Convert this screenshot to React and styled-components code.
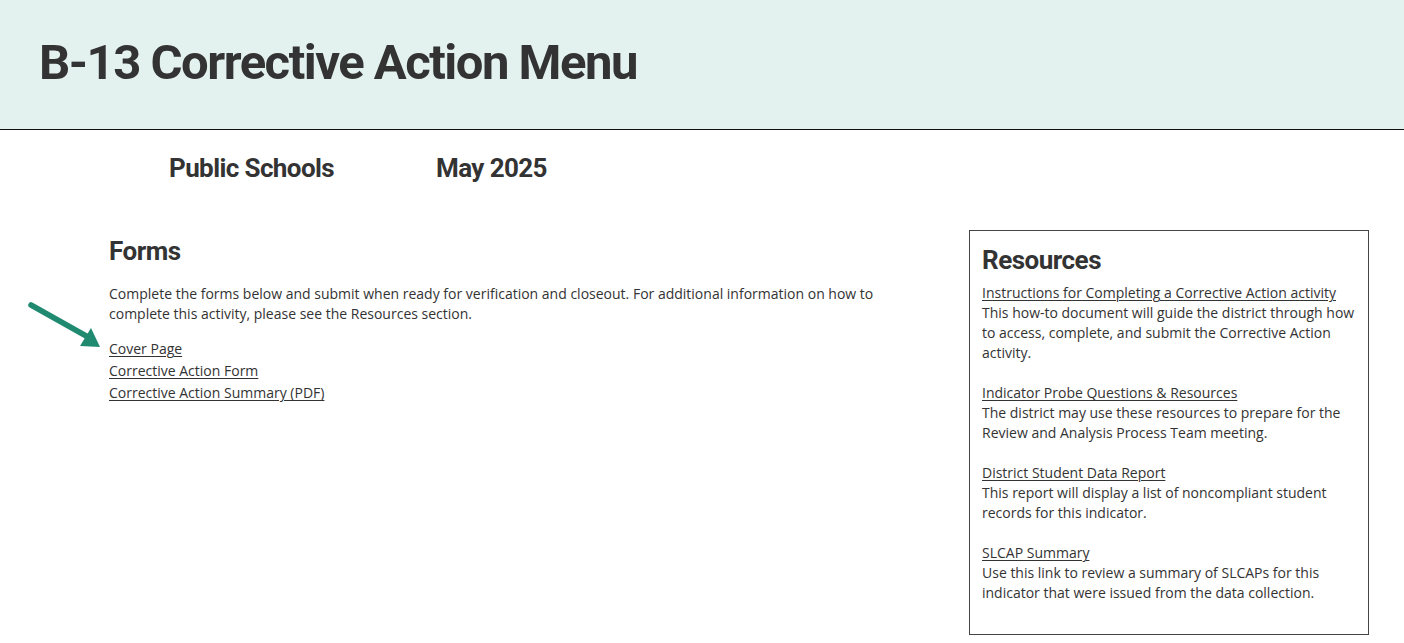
import React from 'react';
import styled, { createGlobalStyle } from 'styled-components';

const GlobalStyle = createGlobalStyle`
  html, body {
    margin: 0;
    padding: 0;
    background: #fff;
  }
  body {
    font-family: "Open Sans", "Liberation Sans", sans-serif;
    color: #333;
  }
`;

const Header = styled.header`
  height: 129px;
  background: #e3f2ef;
  border-bottom: 1px solid #111;
  display: flex;
  align-items: center;
  padding-left: 39px;
  box-sizing: content-box;
`;

const Title = styled.h1`
  margin: 0 0 4px;
  font-family: Roboto, "Liberation Sans", sans-serif;
  font-weight: 700;
  font-size: 49px;
  line-height: 56px;
  letter-spacing: -1.5px;
  color: #333;
`;

const SubRow = styled.div`
  display: flex;
  gap: 102px;
  padding: 23px 0 0 169px;
`;

const SubItem = styled.h2`
  margin: 0;
  font-family: Roboto, "Liberation Sans", sans-serif;
  font-weight: 700;
  font-size: 26px;
  line-height: 30px;
  letter-spacing: -0.6px;
  color: #333;
`;

const Main = styled.main`
  display: flex;
  align-items: flex-start;
  padding: 0 0 8px 109px;
  margin-top: 47px;
`;

const FormsColumn = styled.section`
  position: relative;
  width: 800px;
  margin-top: 6px;
`;

const SectionTitle = styled.h2`
  margin: 0 0 ${p => p.$gap}px;
  font-family: Roboto, "Liberation Sans", sans-serif;
  font-weight: 700;
  font-size: 26px;
  line-height: 30px;
  letter-spacing: -0.5px;
  color: #333;
`;

const Text = styled.p`
  margin: 0;
  font-size: 14px;
  line-height: 20px;
  color: #333;
`;

const LinkList = styled.ul`
  list-style: none;
  margin: 14px 0 0;
  padding: 0;
`;

const LinkItem = styled.li`
  font-size: 14px;
  line-height: 22px;
`;

const Link = styled.a`
  color: #333;
  text-decoration: underline;
  text-underline-offset: 2px;
  text-decoration-thickness: 1px;
  cursor: pointer;
`;

const Arrow = styled.svg`
  position: absolute;
  left: -81px;
  top: 66px;
  width: 76px;
  height: 48px;
`;

const ResourceBox = styled.aside`
  margin-left: 60px;
  width: 400px;
  border: 1px solid #444;
  padding: 14px 12px 31px 12px;
  box-sizing: border-box;
`;

const ResourceItem = styled.div`
  & + & {
    margin-top: 20px;
  }
`;

const ResourceLink = styled(Link)`
  display: block;
  font-size: 14px;
  line-height: 20px;
`;

const resources = [
  {
    title: 'Instructions for Completing a Corrective Action activity',
    text: 'This how-to document will guide the district through how to access, complete, and submit the Corrective Action activity.',
  },
  {
    title: 'Indicator Probe Questions & Resources',
    text: 'The district may use these resources to prepare for the Review and Analysis Process Team meeting.',
  },
  {
    title: 'District Student Data Report',
    text: 'This report will display a list of noncompliant student records for this indicator.',
  },
  {
    title: 'SLCAP Summary',
    text: 'Use this link to review a summary of SLCAPs for this indicator that were issued from the data collection.',
  },
];

const forms = ['Cover Page', 'Corrective Action Form', 'Corrective Action Summary (PDF)'];

export default function App() {
  return (
    <>
      <GlobalStyle />
      <Header>
        <Title>B-13 Corrective Action Menu</Title>
      </Header>
      <SubRow>
        <SubItem>Public Schools</SubItem>
        <SubItem>May 2025</SubItem>
      </SubRow>
      <Main>
        <FormsColumn>
          <SectionTitle $gap={18}>Forms</SectionTitle>
          <Text>
            Complete the forms below and submit when ready for verification and closeout. For additional
            information on how to complete this activity, please see the Resources section.
          </Text>
          <LinkList>
            {forms.map(f => (
              <LinkItem key={f}>
                <Link>{f}</Link>
              </LinkItem>
            ))}
          </LinkList>
          <Arrow viewBox="0 0 76 48">
            <line x1="3" y1="3" x2="60" y2="35" stroke="#1f8a6f" strokeWidth="5.5" strokeLinecap="round" />
            <polygon points="72,45 63,26 52,44" fill="#1f8a6f" />
          </Arrow>
        </FormsColumn>
        <ResourceBox>
          <SectionTitle $gap={8}>Resources</SectionTitle>
          {resources.map(r => (
            <ResourceItem key={r.title}>
              <ResourceLink>{r.title}</ResourceLink>
              <Text>{r.text}</Text>
            </ResourceItem>
          ))}
        </ResourceBox>
      </Main>
    </>
  );
}
